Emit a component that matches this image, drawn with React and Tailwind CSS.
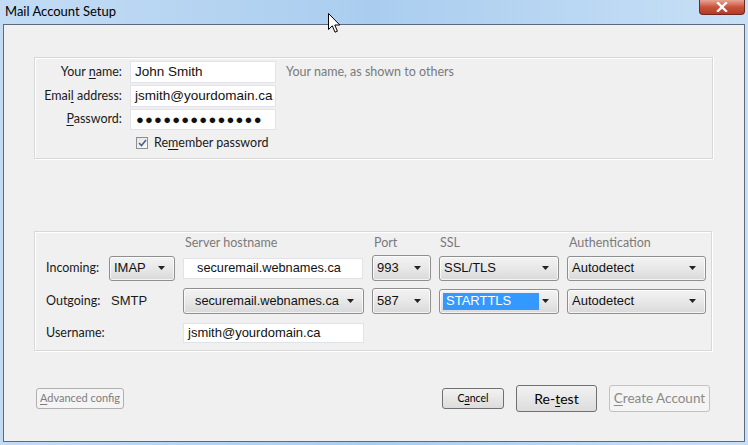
import React from "react";

const Arrow = () => (
  <svg width="8" height="5" viewBox="0 0 8 5" className="shrink-0">
    <path d="M0 0 H7 L3.5 4 Z" fill="#222" />
  </svg>
);

function Select({ className = "", children, h = "h-[25px]" }) {
  return (
    <div
      className={`flex items-center justify-between ${h} rounded-[3px] border border-[#8e8f8f] bg-gradient-to-b from-[#f3f3f3] via-[#e8e8e8] to-[#d9d9d9] pl-[4px] pr-[8px] text-[13px] text-[#111] whitespace-nowrap shadow-[inset_0_0_0_1px_rgba(255,255,255,0.7)] ${className}`}
      style={{ fontFamily: '"Liberation Sans", Arial, sans-serif' }}
    >
      <div className="flex-1 min-w-0 flex items-center">{children}</div>
      <Arrow />
    </div>
  );
}

function Input({ className = "", children }) {
  return (
    <div
      className={`flex items-center bg-white border border-[#e2e3ea] text-[#111] whitespace-nowrap overflow-hidden ${className}`}
      style={{ fontFamily: '"Liberation Sans", Arial, sans-serif' }}
    >
      {children}
    </div>
  );
}

const U = ({ children }) => <span className="underline underline-offset-2">{children}</span>;

export default function App() {
  const ui = { fontFamily: 'Lato, "Noto Sans", sans-serif' };
  return (
    <div
      className="relative w-[748px] h-[445px] overflow-hidden bg-gradient-to-r from-[#c3dcf4] via-[#aacdef] to-[#c8e0f6] select-none"
      style={ui}
    >
      {/* title bar */}
      <div className="flex items-start h-[24px] relative">
        <div className="pl-[5px] pt-[2px] text-[13px] text-black">Mail Account Setup</div>
        <div className="ml-auto mr-[3px] w-[46px] h-[15px] rounded-b-[4px] border border-t-0 border-[#6b2a20] bg-gradient-to-b from-[#e8a493] via-[#c8523c] to-[#b73a22] flex items-center justify-center">
          <svg width="12" height="10" viewBox="0 0 12 10">
            <path d="M2 1 L10 9 M10 1 L2 9" stroke="#fff" strokeWidth="2.4" strokeLinecap="square" />
          </svg>
        </div>
      </div>

      {/* client area */}
      <div className="mx-[3px] h-[418px] border border-[#5a6b80] bg-[#f0f0f0] flex flex-col">
        {/* panel 1 */}
        <div className="ml-[30px] mr-[31px] mt-[32px] h-[102px] border border-[#d8d8d8] shadow-[inset_1px_1px_0_#fff,1px_1px_0_#fff] pt-[3px]">
          <div className="flex flex-col gap-[2px] text-[12.5px] text-[#1a1a1a]">
            <div className="flex items-center h-[22px]">
              <div className="w-[87px] text-right">Your <U>n</U>ame:</div>
              <Input className="ml-[8px] w-[146px] h-[22px] pl-[4px] text-[13.5px]">John Smith</Input>
              <div className="ml-[10px] text-[#7a7a7a]">Your name, as shown to others</div>
            </div>
            <div className="flex items-center h-[22px]">
              <div className="w-[87px] text-right">Emai<U>l</U> address:</div>
              <Input className="ml-[8px] w-[146px] h-[22px] pl-[4px] text-[13.5px]">jsmith@yourdomain.ca</Input>
            </div>
            <div className="flex items-center h-[21px]">
              <div className="w-[87px] text-right"><U>P</U>assword:</div>
              <Input className="ml-[8px] w-[146px] h-[21px] pl-[5px] text-[13px] tracking-[1.2px]">
                ●●●●●●●●●●●●●●
              </Input>
            </div>
            <div className="flex items-center h-[22px] pl-[101px]">
              <div className="w-[12px] h-[12px] border border-[#8f8f8f] bg-gradient-to-br from-[#e4e4e4] to-[#fafafa] flex items-center justify-center">
                <svg width="9" height="8" viewBox="0 0 9 8">
                  <path d="M1 4 L3.5 6.5 L8 1" stroke="#4a5f8c" strokeWidth="1.6" fill="none" />
                </svg>
              </div>
              <div className="ml-[6px]">Re<U>m</U>ember password</div>
            </div>
          </div>
        </div>

        {/* panel 2 */}
        <div className="ml-[30px] mr-[32px] mt-[72px] h-[120px] border border-[#d8d8d8] shadow-[inset_1px_1px_0_#fff,1px_1px_0_#fff] text-[12.5px] text-[#1a1a1a]">
          <div className="flex h-[22px] items-end pb-[1px] text-[#7a7a7a]">
            <div className="w-[150px]" />
            <div className="w-[189px]">Server hostname</div>
            <div className="w-[66px]">Port</div>
            <div className="w-[129px]">SSL</div>
            <div>Authentication</div>
          </div>
          <div className="flex items-center h-[26px] mt-[1px]">
            <div className="w-[74px] pl-[11px]">Incoming:</div>
            <Select className="w-[66px]">IMAP</Select>
            <Input className="ml-[8px] w-[180px] h-[21px] pl-[13px] text-[12.75px]">securemail.webnames.ca</Input>
            <Select className="ml-[9px] w-[59px] h-[26px]">993</Select>
            <Select className="ml-[8px] w-[120px]">SSL/TLS</Select>
            <Select className="ml-[8px] w-[139px]">Autodetect</Select>
          </div>
          <div className="flex items-center h-[26px] mt-[7px]">
            <div className="w-[65px] pl-[11px] whitespace-nowrap">Outgoing:</div>
            <div className="w-[83px] pl-[11px]" style={{ fontFamily: '"Liberation Sans", Arial, sans-serif', fontSize: 13 }}>SMTP</div>
            <Select className="w-[181px] h-[26px] pl-[11px]">
              <span className="text-[12.75px]">securemail.webnames.ca</span>
            </Select>
            <Select className="ml-[8px] w-[59px] h-[26px]">587</Select>
            <Select className="ml-[8px] w-[120px]">
              <span className="bg-[#3399ff] text-white w-[96px] h-[17px] flex items-center pl-[3px] -ml-[1px]">STARTTLS</span>
            </Select>
            <Select className="ml-[8px] w-[139px]">Autodetect</Select>
          </div>
          <div className="flex items-center h-[20px] mt-[9px]">
            <div className="w-[148px] pl-[11px]">Username:</div>
            <Input className="w-[181px] h-[20px] pl-[4px] text-[13px]">jsmith@yourdomain.ca</Input>
          </div>
        </div>

        {/* buttons */}
        <div className="flex items-center mt-[34px] ml-[32px] mr-[34px] h-[27px] whitespace-nowrap">
          <div className="h-[21px] w-[88px] rounded-[3px] border border-[#b0b0b0] bg-[#f4f4f4] flex items-center justify-center text-[11px] text-[#7d7d7d]">
            <span><U>A</U>dvanced config</span>
          </div>
          <div className="ml-auto h-[21px] w-[62px] rounded-[3px] border border-[#707070] bg-gradient-to-b from-[#f2f2f2] to-[#dcdcdc] flex items-center justify-center text-[10.5px] text-black">
            <span>C<U>a</U>ncel</span>
          </div>
          <div className="ml-[12px] h-[27px] w-[81px] rounded-[3px] border border-[#707070] bg-gradient-to-b from-[#f2f2f2] to-[#dcdcdc] flex items-center justify-center text-[14px] text-black">
            <span>Re-<U>t</U>est</span>
          </div>
          <div className="ml-[12px] h-[27px] w-[101px] rounded-[3px] border border-[#c2c2c2] bg-[#f4f4f4] flex items-center justify-center text-[13.5px] text-[#8a8a8a]">
            <span><U>C</U>reate Account</span>
          </div>
        </div>
      </div>

      {/* mouse cursor */}
      <svg className="absolute left-[328px] top-[13px]" width="13" height="21" viewBox="0 0 13 21">
        <path d="M0.5 0.5 V16.5 L4.3 12.8 L7 19.2 L9.4 18.2 L6.8 12 H11.8 Z" fill="#fff" stroke="#000" strokeWidth="1" strokeLinejoin="round" />
      </svg>
    </div>
  );
}
